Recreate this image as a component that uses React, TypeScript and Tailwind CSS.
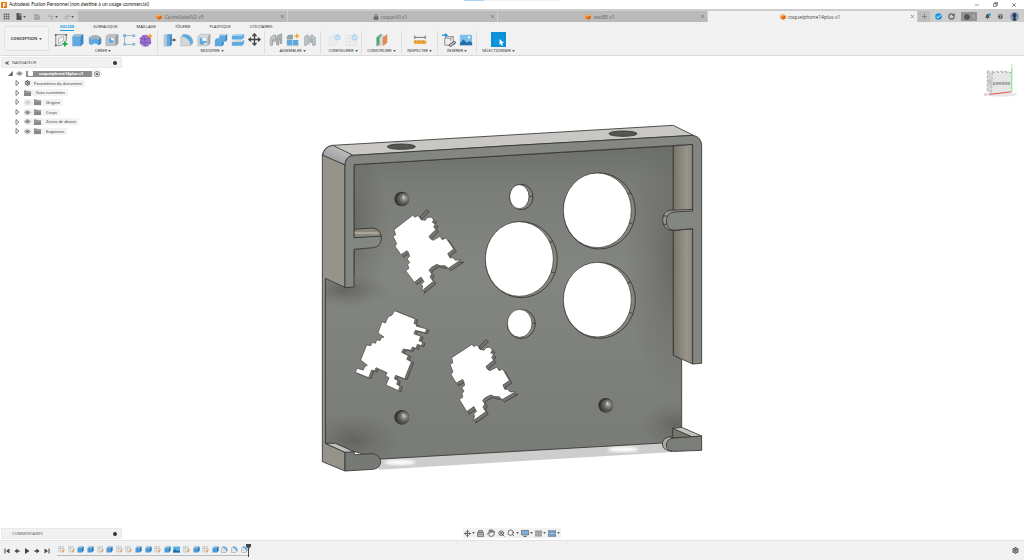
import React from "react";
import {
  ChevronsLeft,
  CircleHelp,
  Clock,
  Copy,
  Grip,
  Hand,
  Minus,
  Move,
  Plus,
  Redo2,
  RotateCw,
  Save,
  Search,
  Settings,
  Undo2,
  X,
  ZoomIn,
} from "lucide-react";

const Caret = () => (
  <svg viewBox="0 0 4 3" className="h-[2px] w-[3px] shrink-0" fill="#555">
    <path d="M0 0h4L2 3z" />
  </svg>
);

const Cube = () => (
  <svg viewBox="0 0 12 12" className="h-[6px] w-[6px] shrink-0">
    <path d="M1 3 6 .5 11 3v6L6 11.7 1 9z" fill="#f47a1c" />
    <path d="M1 3 6 .5 11 3 6 5.5z" fill="#ffb066" />
    <path d="M6 5.5 11 3v6l-5 2.7z" fill="#e4600a" />
  </svg>
);

const Lock = () => (
  <svg viewBox="0 0 12 12" className="h-[6px] w-[6px] shrink-0">
    <path d="M3.5 6V3.5a2.5 2.5 0 0 1 5 0V6" fill="none" stroke="#666" strokeWidth="1.5" />
    <rect x="1.5" y="5" width="9" height="6.5" fill="#666" />
  </svg>
);

/* ---------- Toolbar icons ---------- */

const BLUE = "#5fa8e0";
const DARK = "#3c86c4";
const LIGHT = "#9fd0f2";

const art: Record<string, React.ReactNode> = {
  sketch: (
    <>
      <path d="M2 2h12M2 2v12M14 2v7M2 14h7" stroke="#777" fill="none" />
      <path d="M5 12V6l6-2v5L5 12" stroke="#999" fill="none" strokeWidth=".8" />
      <path d="M1 1h2v2H1zM13 1h2v2h-2zM1 13h2v2H1z" fill="#666" />
      <path d="M12.500 9.500v6M9.500 12.500h6" stroke="#20a848" strokeWidth="2" />
    </>
  ),
  extrude: (
    <>
      <path d="M1.500 4 4 1.500h10V12l-3 3H1.500z" fill={BLUE} />
      <path d="M1.500 4 4 1.500h10L11 4z" fill="#a9bccb" />
      <path d="M11 4l3-2.500V12l-3 3z" fill={DARK} />
    </>
  ),
  revolve: (
    <>
      <path d="M1 5q7-5 14 0v7l-3 2q-4-4-8 0l-3-2z" fill={BLUE} />
      <path d="M1 5q7-5 14 0l-3 3q-4-3-8 0z" fill="#a9b3ba" />
      <path d="M12 8 15 5v7l-3 2z" fill={DARK} />
    </>
  ),
  hole: (
    <>
      <path d="M1 4 4 1.500h11V12l-3 2.500H1z" fill="#bfc2c4" stroke="#999" strokeWidth=".4" />
      <path d="M12 4 15 1.500V12l-3 2.500z" fill="#999" />
      <circle cx="7" cy="8.500" r="4" fill="#f4f4f4" stroke="#999" strokeWidth=".6" />
      <path d="M7 5.500a3 3 0 1 0 3 3L7 8z" fill={BLUE} />
    </>
  ),
  pattern: (
    <>
      <path d="M3 3h10M3 3v10M3 13h10" stroke="#9ab" strokeWidth="1" fill="none" />
      <path d="M1.500 1.500h3v3h-3z" fill={BLUE} />
      <path d="M12 1.500h3v3h-3zM12 11.500h3v3h-3zM1.500 11.500h3v3h-3z" fill="#8db9d8" />
    </>
  ),
  form: (
    <>
      <path d="M1 6 4 2.500 9 2l4.500 3.500.5 6-4 4H5l-4-3.500z" fill="#9a73cf" />
      <path d="M1 6l6 1.500 6.500-2M7 7.500v8M1 11l6-.5 7 1M5 2.500l2 5" stroke="#7650b0" fill="none" strokeWidth=".9" />
      <path d="m12.500 0 1 2.500L16 3.500l-2.500 1-1 2.500-1-2.500L9 3.500l2.500-1z" fill="#f5a11b" />
    </>
  ),
  press: (
    <>
      <path d="M1 3 3 1h7v12l-2 2H1z" fill={BLUE} />
      <path d="M8 3l2-2v12l-2 2z" fill={DARK} />
      <path d="M1 3 3 1h3L4.500 3v12H1z" fill="#b9c4cc" />
      <path d="M10 8h2.500" stroke="#444" strokeWidth="1.200" />
      <path d="m12 6 3 2-3 2z" fill="#444" />
    </>
  ),
  fillet: (
    <>
      <path d="M1 4 4 1.500q9 0 11 9L12 14.500H1z" fill="#d5d8da" stroke="#999" strokeWidth=".5" />
      <path d="M4 1.500q10 0 11 9.500l-3 3q-1-9-10-10z" fill={BLUE} />
    </>
  ),
  shell: (
    <>
      <path d="M1 4 4 1.500h11V12l-3 2.500H1z" fill="#d8dadb" stroke="#999" strokeWidth=".5" />
      <path d="M3 5.500h8V11H8v2H3z" fill={BLUE} />
      <path d="M6 5.500h5V9H6z" fill="#f2f6f9" />
      <path d="M12 4 15 1.500V12l-3 2.500z" fill="#aaa" />
    </>
  ),
  combine: (
    <>
      <path d="M1 8 3 6h3V3l2-2h7v7l-2 2h-2v3l-2 2H1z" fill={BLUE} />
      <path d="m13 3 2-2v7l-2 2zM9 10h2v3l-2 2z" fill={DARK} />
      <path d="m6 3 2-2h7l-2 2z" fill={LIGHT} />
    </>
  ),
  split: (
    <>
      <path d="M1 3.500 3.500 1H15v4l-2.500 2.500H1z" fill={BLUE} />
      <path d="M1 3.500 3.500 1H15l-2.500 2.500z" fill={LIGHT} />
      <path d="M1 10h11.500L15 7.500V12l-2.500 2.500H1z" fill={BLUE} />
      <path d="M1 10 3.500 8H15l-2.500 2z" fill="#d8dadb" />
    </>
  ),
  joint: (
    <>
      <path d="M1.500 14V8q0-4 3-5l3-1v7L5 10v-3q-1 0-1 2v5z" fill="#c4c7c9" stroke="#888" strokeWidth=".7" />
      <path d="M8.500 13V6q0-3 3-4l3-1v11h-2V7q-1.500 0-1.500 2v5z" fill="#aeb2b5" stroke="#888" strokeWidth=".7" />
    </>
  ),
  component: (
    <>
      <path d="M1 4h6v4h7v7H1z" fill="#c9ccce" />
      <path d="M1 8h6v6H1z" fill={BLUE} />
      <path d="M8 8h6v6H8z" fill={BLUE} />
      <path d="M1 4 3 2h5v5H1z" fill="#8fa3b0" />
      <path d="m12.500 0 1 2.500L16 3.500l-2.500 1-1 2.500-1-2.500L9 3.500l2.500-1z" fill="#f5a11b" />
    </>
  ),
  asbuilt: (
    <>
      <path d="M2 14V4l3-2 1 1v9l-2 2z" fill="#c4c7c9" stroke="#888" strokeWidth=".7" />
      <path d="M14 14V5l-4-3-2 3v5l2 1V6l1 1v7z" fill="#c4c7c9" stroke="#888" strokeWidth=".7" />
      <path d="M7 3v10" stroke="#6ab0e0" strokeWidth=".8" />
    </>
  ),
  config: (
    <>
      <path d="M1 5 4 3h6v9l-2 2H1z" fill="#e9ebec" stroke="#ddd" strokeWidth=".5" />
      <circle cx="11" cy="5" r="3.500" fill="#b4d8ef" />
      <path d="m9.500 5 1.200 1.200L12.800 4" stroke="#fff" fill="none" />
    </>
  ),
  table: (
    <>
      <path d="M1 3h12v11H1zM1 6.500h12M1 10h12M5 3v11" fill="none" stroke="#dcdfe0" />
      <circle cx="11" cy="5" r="3.500" fill="#b4d8ef" />
      <path d="m9.500 5 1.200 1.200L12.800 4" stroke="#fff" fill="none" />
    </>
  ),
  plane: (
    <>
      <path d="m2 5 5-4v10l-5 4z" fill="#43b06f" stroke="#7a8a80" strokeWidth=".6" />
      <path d="m5 5 4-3v10l-4 3z" fill="#d6dbd8" stroke="#999" strokeWidth=".4" />
      <path d="m9 5 5-4v10l-5 4z" fill="#e58a56" />
    </>
  ),
  measure: (
    <>
      <path d="M2 3v4M14 3v4M2 5h12" stroke="#555" strokeWidth=".9" />
      <path d="M1 8.500h14v4H1z" fill="#eda63c" />
      <path d="M3 8.500v2M6 8.500v2M9 8.500v2M12 8.500v2" stroke="#a86f1d" strokeWidth=".7" />
    </>
  ),
  insert: (
    <>
      <path d="M3 6l3-2h7v6M3 6v8h5M3 6h7l3-2M10 6v3" fill="#e3e5e6" stroke="#888" strokeWidth=".9" />
      <path d="M0 2.500h4" stroke="#1e8fd6" strokeWidth="1.500" />
      <path d="m3.500 0 3.500 2.500L3.500 5z" fill="#1e8fd6" />
      <path d="M9.500 14l4.500-3" stroke="#555" strokeWidth="3.500" strokeLinecap="round" />
      <path d="M9.500 14l4.500-3" stroke="#eee" strokeWidth="1.200" strokeLinecap="round" />
    </>
  ),
  image: (
    <>
      <path d="M1 2h14v12H1z" fill="#7cc0ec" />
      <path d="m1 12 4-5 4 4 3-2 3 2v3H1z" fill="#256fa8" />
      <circle cx="11.500" cy="5" r="1.300" fill="#fff" />
    </>
  ),
};

const ToolIcon = ({ name, label }: { name: string; label: string }) => (
  <button aria-label={label} className="flex h-[17px] w-[17px] items-center justify-center">
    {name === "move" ? (
      <Move className="h-[13px] w-[13px] text-[#444]" strokeWidth={2.500} />
    ) : (
      <svg viewBox="0 0 16 16" className="h-[14px] w-[14px]">
        {art[name]}
      </svg>
    )}
  </button>
);

const groups: { label: string; pad: string; icons: [string, string][] }[] = [
  {
    label: "CRÉER",
    pad: "pr-[3px]",
    icons: [
      ["sketch", "Esquisse"],
      ["extrude", "Extrusion"],
      ["revolve", "Révolution"],
      ["hole", "Perçage"],
      ["pattern", "Réseau"],
      ["form", "Forme"],
    ],
  },
  {
    label: "MODIFIER",
    pad: "pl-[3px] pr-[1px]",
    icons: [
      ["press", "Appuyer/Tirer"],
      ["fillet", "Congé"],
      ["shell", "Coque"],
      ["combine", "Combiner"],
      ["split", "Scinder"],
      ["move", "Déplacer"],
    ],
  },
  {
    label: "ASSEMBLER",
    pad: "px-[2px]",
    icons: [
      ["joint", "Liaison"],
      ["component", "Nouveau composant"],
      ["asbuilt", "Liaison existante"],
    ],
  },
  {
    label: "CONFIGURER",
    pad: "pl-[5px] pr-[1px]",
    icons: [
      ["config", "Configurer"],
      ["table", "Table"],
    ],
  },
  { label: "CONSTRUIRE", pad: "px-[11px]", icons: [["plane", "Plan"]] },
  { label: "INSPECTER", pad: "px-[9px]", icons: [["measure", "Mesurer"]] },
  {
    label: "INSÉRER",
    pad: "px-[2px]",
    icons: [
      ["insert", "Insérer"],
      ["image", "Image"],
    ],
  },
];

const MenuLabel = ({ children }: { children: string }) => (
  <button className="flex h-[6px] items-center justify-center gap-[1px] whitespace-nowrap text-[4px] leading-[6px] text-[#333]">
    {children}
    <Caret />
  </button>
);

const Toolbar = () => (
  <div className="flex h-[34px] shrink-0 border-b border-[#dcdcdc] bg-[#f1f1f1] font-['Noto_Sans','Open_Sans',sans-serif]">
    <button className="mt-[4px] ml-[4px] flex h-[25px] w-[45px] shrink-0 items-center justify-center gap-[2px] rounded-[2px] border border-[#e2e2e2] bg-[#f3f3f3] text-[4px] font-bold text-[#444]">
      CONCEPTION
      <Caret />
    </button>
    <div className="flex flex-col pt-[1px] pl-[3px]">
      <nav className="flex h-[8px] gap-[19px] pl-[8px] text-[4px] leading-[7px] text-[#333]">
        <a href="#solide" className="border-b border-[#1a9ae0] font-bold text-[#1a9ae0]">SOLIDE</a>
        <a href="#surfacique">SURFACIQUE</a>
        <a href="#maillage">MAILLAGE</a>
        <a href="#tolerie">TÔLERIE</a>
        <a href="#plastique">PLASTIQUE</a>
        <a href="#utilitaires">UTILITAIRES</a>
      </nav>
      <div className="flex h-[23px] divide-x divide-[#dedede]">
        {groups.map((g) => (
          <div key={g.label} className={`flex flex-col items-center ${g.pad}`}>
            <div className="flex">
              {g.icons.map(([n, l]) => (
                <ToolIcon key={n} name={n} label={l} />
              ))}
            </div>
            <div className="flex w-0 justify-center">
              <MenuLabel>{g.label}</MenuLabel>
            </div>
          </div>
        ))}
        <div className="flex flex-col items-center px-[5px]">
          <button aria-label="Sélection" className="mt-[1px] mb-[1px] h-[15px] w-[15px] bg-[#0c95dd]">
            <svg viewBox="0 0 15 15" className="h-[15px] w-[15px]">
              <path d="M1.500 1.500h12v12h-12z" fill="none" stroke="#0670ab" strokeDasharray="1 1" strokeWidth=".6" />
              <path d="m8.500 7 4.500 4-2 .3 1 2.200-1.200.5-1-2.200-1.300 1.300z" fill="#fff" />
            </svg>
          </button>
          <MenuLabel>SÉLECTIONNER</MenuLabel>
        </div>
      </div>
    </div>
  </div>
);

/* ---------- Document tabs ---------- */

const tabs = [
  { name: "CacheSoleilV2 v5", icon: <Cube />, active: false },
  { name: "coqueV0 v1", icon: <Lock />, active: false },
  { name: "test88 v1", icon: <Cube />, active: false },
  { name: "coqueiphone14plus v1", icon: <Cube />, active: true },
];

const QuickButton = ({ label, children }: { label: string; children: React.ReactNode }) => (
  <button aria-label={label} className="flex items-center gap-[1px]">
    {children}
  </button>
);

const TabBar = () => (
  <div className="flex h-[13px] shrink-0 bg-[#cdcdcd] pt-[2px]">
    <div className="flex w-[78px] shrink-0 items-center pl-[3px] text-[#555]">
      <QuickButton label="Données"><Grip className="h-[7px] w-[7px]" strokeWidth={4} /></QuickButton>
      <div className="ml-[6px] flex">
        <QuickButton label="Fichier">
          <svg viewBox="0 0 12 14" className="h-[7px] w-[6px]"><path d="M1 0h6v5h4v9H1z" fill="#555" /><path d="m8 0 3.500 4H8z" fill="#555" /></svg>
          <Caret />
        </QuickButton>
      </div>
      <div className="ml-[8px] flex"><QuickButton label="Enregistrer"><Save className="h-[6px] w-[6px] text-[#888]" strokeWidth={3} /></QuickButton></div>
      <div className="ml-[8px] flex text-[#999]"><QuickButton label="Annuler"><Undo2 className="h-[6px] w-[6px]" strokeWidth={3} /><Caret /></QuickButton></div>
      <div className="ml-[6px] flex text-[#999]"><QuickButton label="Rétablir"><Redo2 className="h-[6px] w-[6px]" strokeWidth={3} /><Caret /></QuickButton></div>
    </div>
    <div className="flex flex-1 gap-[1px]">
      {tabs.map((t) => (
        <div
          key={t.name}
          className={`flex flex-1 items-center text-[5px] leading-[10px] ${t.active ? "bg-[#f1f1f1] text-[#444]" : "bg-[#bababa] text-[#666]"}`}
        >
          <button className="flex flex-1 items-center justify-center gap-[2px] pl-[2px] whitespace-nowrap">
            {t.icon}
            {t.name}
          </button>
          <button aria-label={`Fermer ${t.name}`} className="pr-[2px]">
            <X className="h-[5px] w-[5px] text-[#666]" strokeWidth={3} />
          </button>
        </div>
      ))}
    </div>
    <button aria-label="Nouvel onglet" className="ml-[1px] flex w-[12px] items-center justify-center bg-[#bdbdbd]">
      <Plus className="h-[7px] w-[7px] text-[#777]" strokeWidth={3} />
    </button>
    <div className="flex w-[94px] shrink-0 items-center justify-between pr-[5px] pl-[5px]">
      <QuickButton label="Extensions">
        <svg viewBox="0 0 14 14" className="h-[7px] w-[7px]"><circle cx="7" cy="7" r="6.500" fill="#1b93de" /><path d="m3.500 7.500 2.500 2 5-5" fill="none" stroke="#fff" strokeWidth="2" /></svg>
      </QuickButton>
      <QuickButton label="Synchroniser"><RotateCw className="h-[7px] w-[7px] text-[#666]" strokeWidth={4} /></QuickButton>
      <button aria-label="Tâches" className="flex h-[9px] w-[16px] items-center justify-center gap-[2px] rounded-[1px] bg-[#929292] text-[4px] leading-[9px] text-white">
        <Clock className="h-[6px] w-[6px] fill-[#555] text-[#555]" strokeWidth={3.500} />1
      </button>
      <QuickButton label="Notifications">
        <svg viewBox="0 0 14 14" className="h-[7px] w-[7px]"><path d="M2 10q2-2 2-5 0-3 3-3t3 3q0 3 2 5zM5.500 11h3l-1.500 2z" fill="#555" /><circle cx="11" cy="3" r="2.500" fill="#1b93de" /></svg>
      </QuickButton>
      <QuickButton label="Aide">
        <CircleHelp className="h-[7px] w-[7px] fill-[#555] text-[#e6e6e6]" strokeWidth={2.500} />
      </QuickButton>
      <QuickButton label="Profil">
        <svg viewBox="0 0 18 18" className="h-[9px] w-[9px]"><circle cx="9" cy="9" r="9" fill="#8aa0b8" /><path d="M5 6q0-4 4-4t4 4q0 4-2 5v2l3 3q-5 3-10 0l3-3v-2Q5 10 5 6z" fill="#2d3a50" /></svg>
      </QuickButton>
    </div>
  </div>
);

/* ---------- Browser tree ---------- */

const Eye = ({ off }: { off?: boolean }) => (
  <svg viewBox="0 0 14 10" className="h-[5px] w-[7px] shrink-0" opacity={off ? 0.35 : 1}>
    <path d="M1 5q6-7 12 0-6 7-12 0z" fill="#ccc" stroke="#777" strokeWidth="1.200" />
    <circle cx="7" cy="5" r="2.200" fill="#666" />
  </svg>
);

const Folder = () => (
  <svg viewBox="0 0 14 12" className="h-[6px] w-[7px] shrink-0">
    <path d="M0 1h5l1 1.500h8V12H0z" fill="#888" />
    <path d="M0 4.500h14" stroke="#bbb" />
  </svg>
);

const Expand = () => (
  <button aria-label="Développer" className="flex h-[6px] w-[6px] items-center">
    <svg viewBox="0 0 10 12" className="h-[6px] w-[5px]"><path d="m2 1 6 5-6 5z" fill="#fff" stroke="#555" strokeWidth="1.500" /></svg>
  </button>
);

const nodes: { name: string; eye?: "on" | "off"; gear?: boolean }[] = [
  { name: "Paramètres du document", gear: true },
  { name: "Vues nommées" },
  { name: "Origine", eye: "off" },
  { name: "Corps", eye: "on" },
  { name: "Zones de dessin", eye: "on" },
  { name: "Esquisses", eye: "on" },
];

const PanelHeader = ({ title, collapse }: { title: string; collapse?: boolean }) => (
  <div className="flex h-[11px] w-[121px] items-center border border-[#e9e9e9] bg-[#f1f1f1] pr-[4px] pl-[2px] text-[4px] leading-[10px] text-[#555]">
    <span className="flex w-[8px]">
      {collapse && <ChevronsLeft className="h-[6px] w-[6px] text-[#333]" strokeWidth={4} />}
    </span>
    <span className="flex-1">{title}</span>
    <button aria-label={`Options ${title}`} className="h-[4px] w-[4px] rounded-full bg-[#333]" />
  </div>
);

const Browser = () => (
  <aside className="absolute top-[1px] left-[1px] font-['Noto_Sans','Open_Sans',sans-serif]">
    <PanelHeader title="NAVIGATEUR" collapse />
    <ul className="mt-[1px] grid h-[67px] grid-rows-7 items-center text-[4px] leading-[7px] text-[#333]">
      <li className="flex items-center gap-[3px] pl-[7px]">
        <svg viewBox="0 0 10 10" className="h-[5px] w-[5px]"><path d="M9.500 0v10H0z" fill="#666" /></svg>
        <Eye />
        <span className="flex items-center">
          <span className="flex h-[6px] w-[66px] items-center gap-[6px] bg-[#8e8e8e] pl-[2px] font-bold text-white">
            <span className="h-[5px] w-[5px] rounded-[1px] bg-white" />
            coqueiphone14plus v1
          </span>
          <label className="flex h-[7px] w-[10px] items-center justify-center bg-[#f1f1f1]">
            <input type="radio" defaultChecked aria-label="Activer le composant" className="h-[6px] w-[6px] appearance-none rounded-full border border-[#888] bg-[#444] bg-clip-content p-[1px]" />
          </label>
        </span>
      </li>
      {nodes.map((n) => (
        <li key={n.name} className="flex items-center gap-[3px] pl-[14px]">
          <Expand />
          <span className="flex h-[7px] items-center gap-[3px] bg-[#f3f3f3] pr-[3px] whitespace-nowrap">
            {n.eye && <Eye off={n.eye === "off"} />}
            {n.gear ? <Settings className="h-[6px] w-[7px] text-[#555]" strokeWidth={4} /> : <Folder />}
            <span className={n.gear ? "" : "pl-[2px]"}>{n.name}</span>
          </span>
        </li>
      ))}
    </ul>
  </aside>
);

/* ---------- View cube ---------- */

const ViewCube = () => (
  <svg viewBox="280 185 105 110" className="absolute top-[6px] right-[6px] h-[36px] w-[35px]">
    <ellipse cx="335" cy="284" rx="48" ry="7" fill="#e6e6e6" />
    <path d="m292 213 16 4-3 66-13-6z" fill="#d6d6d6" />
    <path d="m308 217 57 1v58l-60 7z" fill="#e6e6e6" />
    <path d="m292 213 60-1 13 6-57-1z" fill="#f4f4f4" />
    <path d="m292 213 60 1 13 4M292 213v64M308 217l-3 66M308 217h57" fill="none" stroke="#999" strokeWidth="2" strokeDasharray="8 5" />
    <path d="m298 284 68-8" stroke="#e05252" strokeWidth="3" />
    <path d="M367 276v-74" stroke="#6be36b" strokeWidth="3" />
    <text x="309" y="254" fontSize="12" fontWeight="700" fill="#888" fontFamily="Liberation Sans, sans-serif">ARRIÈRE</text>
    <path d="m295 238 8 18M303 240l-8 14" stroke="#aaa" strokeWidth="2" />
    <text x="282" y="290" fontSize="13" fill="#e07070" fontFamily="Liberation Sans, sans-serif">X</text>
    <text x="362" y="200" fontSize="13" fill="#6be36b" fontFamily="Liberation Sans, sans-serif">Y</text>
  </svg>
);

/* ---------- 3D model ---------- */

const RUNNER_A =
  "M0 0 56-43 63-37 71-42 77-37 81-30 94-28 99-36 111-38 119-30 115-22 124-17 119-8 126 0 121 4 105 20 109 27 118 32 138 20 145 30 156 25 179 58 161 72 168 85 176 84 185 92 201 90 163 116 153 108 138 108 128 104 111 114 105 122 113 132 108 142 118 155 83 184 86 168 81 165 90 156 81 142 61 158 35 123 45 116 41 105 47 98 39 88 47 80 43 68 39 63 21 75 3 50 8 42-3 20 5 15z";
const RUNNER_A_SLOT = "M78-38 98-60 105-53 85-33z";
const RUNNER_B =
  "M136 17 198 42 194 55 203 60 200 63 232 72 227 83 198 76 194 86 214 94 209 107 220 112 216 122 204 118 200 130 189 126 185 136 162 132 157 142 177 152 172 163 186 170 166 221 139 211 135 221 146 227 142 238 152 244 147 257 110 240 119 218 109 213 113 203 80 188 76 198 67 195 58 218 18 202 23 190 42 195 46 185 54 181 34 165 52 120 64 122 69 112 78 115 83 104 92 107 96 98 104 96 86 84 98 50 108 54 116 36 128 30z";

const Cutout = ({ d, dx, dy, slot }: { d: string; dx: number; dy: number; slot?: string }) => (
  <>
    <path d={d} transform={`translate(${dx} ${dy})`} fill="#73746f" stroke="#333" strokeWidth="2" />
    <path d={d} transform={`translate(${dx / 2} ${dy / 2})`} fill="#73746f" />
    {slot && <path d={slot} fill="#73746f" stroke="#333" strokeWidth="2" />}
    <path d={d} fill="#fff" stroke="#444" strokeWidth="2" />
  </>
);

const bores = [
  { cx: 868, cy: 288, rx: 108, ry: 114, ix: 862, iy: 286, irx: 102, iry: 112 },
  { cx: 868, cy: 556, rx: 108, ry: 114, ix: 862, iy: 554, irx: 102, iry: 112 },
  { cx: 634, cy: 434, rx: 108, ry: 114, ix: 628, iy: 432, irx: 102, iry: 112 },
  { cx: 634, cy: 246, rx: 35, ry: 38, ix: 628, iy: 245, irx: 29, iry: 36 },
  { cx: 634, cy: 627, rx: 42, ry: 44, ix: 629, iy: 625, irx: 37, iry: 42 },
];

const studs = [
  [276, 252],
  [276, 907],
  [888, 871],
];

const Model = () => (
  <svg viewBox="30 24 1152 1056" className="h-[352px] w-[384px]" role="img" aria-label="Coque">
    <defs>
      <linearGradient id="plate" x1="0" y1="0" x2="0" y2="1">
        <stop offset="0" stopColor="#6d6f6a" />
        <stop offset=".12" stopColor="#7a7c77" />
        <stop offset=".4" stopColor="#838580" />
        <stop offset="1" stopColor="#797b76" />
      </linearGradient>
      <radialGradient id="dark">
        <stop offset="0" stopColor="#4c4d4a" stopOpacity=".5" />
        <stop offset=".5" stopColor="#4c4d4a" stopOpacity=".2" />
        <stop offset="1" stopColor="#4c4d4a" stopOpacity="0" />
      </radialGradient>
      <linearGradient id="wall" x1="0" x2="1">
        <stop offset="0" stopColor="#777369" />
        <stop offset=".7" stopColor="#9a958a" />
        <stop offset="1" stopColor="#8a867b" />
      </linearGradient>
      <linearGradient id="corner" x1="0" y1="1" x2=".7" y2="0">
        <stop offset="0" stopColor="#8e8c83" />
        <stop offset=".5" stopColor="#a9a9ab" />
        <stop offset="1" stopColor="#c9c7c4" />
      </linearGradient>
      <radialGradient id="ball" cx=".6" cy=".4">
        <stop offset="0" stopColor="#c2bfb9" />
        <stop offset=".4" stopColor="#84827d" />
        <stop offset="1" stopColor="#4e4e4b" />
      </radialGradient>
      <clipPath id="plateClip">
        <path d="M46 480H132V149L600 121 1090 93V717L1115 735V981L1057 984 600 1010 212 1032 46 985z" />
      </clipPath>
      <filter id="soft"><feGaussianBlur stdDeviation="4" /></filter>
    </defs>

    <path d="M205 1030 600 1008 1115 978 1130 1009 600 1040 205 1064z" fill="#cdcdcd" />
    <ellipse cx="270" cy="1042" rx="46" ry="8" fill="#fff" filter="url(#soft)" />
    <ellipse cx="940" cy="1003" rx="46" ry="8" fill="#fff" filter="url(#soft)" />

    <g stroke="#333" strokeWidth="2.500" strokeLinejoin="round">
      <path d="M46 480H132V149L600 121 1090 93V717L1115 735V981L1057 984 600 1010 212 1032 46 985z" fill="url(#plate)" />
      <g clipPath="url(#plateClip)" stroke="none">
        <ellipse cx="125" cy="330" rx="110" ry="260" fill="url(#dark)" />
        <ellipse cx="1095" cy="440" rx="150" ry="420" fill="url(#dark)" />
        <ellipse cx="100" cy="525" rx="140" ry="50" fill="url(#dark)" />
        <ellipse cx="130" cy="975" rx="140" ry="80" fill="url(#dark)" />
        <ellipse cx="1100" cy="930" rx="110" ry="70" fill="url(#dark)" />
      </g>

      {bores.map((b) => (
        <g key={`${b.cx}-${b.cy}`}>
          <ellipse cx={b.cx} cy={b.cy} rx={b.rx} ry={b.ry} fill="#85847d" />
          <ellipse cx={b.ix} cy={b.iy} rx={b.irx} ry={b.iry} fill="#fff" strokeWidth="2" />
        </g>
      ))}
      <path d="m952 236 11-3M957 323l11 4M952 504l11-3M957 592l11 4M718 382l11-3M723 470l11 4M657 244h11M666 625h10" fill="none" />

      <path d="M37 120Q42 95 68 91L600 60 1090 31 1150 61 600 92 130 121 105 150z" fill="#c9c7c3" />
      <path d="M37 123Q42 95 68 91L130 121Q107 124 105 150z" fill="url(#corner)" />
      <path d="M37 120 105 150V517L46 490V985L105 1012V1068L37 1040z" fill="#96938a" />
      <ellipse cx="274" cy="95" rx="42" ry="8" fill="#555652" />
      <ellipse cx="939" cy="56" rx="42" ry="8" fill="#555652" />

      <path d="M1090 93 1148 88V288L1090 290z" fill="url(#wall)" />
      <path d="M1090 346 1148 341V747L1090 721z" fill="url(#wall)" />

      <path d="M132 343 187 339Q212 342 214 366L132 368z" fill="#8b877b" />
      <path d="M133 354H205" stroke="#b0aca0" strokeWidth="5" />
      <path d="M1148 283 1080 286Q1058 290 1058 316 1060 344 1084 346L1148 341z" fill="#99968d" />
      <path d="M1059 303h12M1060 328h12" />

      <path
        d="M105 150Q107 123 130 121L600 92 1150 61Q1174 66 1175 92V745L1148 747V341L1092 346Q1070 344 1069 319 1070 293 1092 291L1148 288V88L600 121 132 149V368L205 364H214Q216 394 190 398L132 403V516L105 518z"
        fill="#838681"
      />

      <path d="M46 985 76 985 132 1010V1014L105 1012z" fill="#c2c1be" />
      <path d="M105 1012 132 1010 134 1019 190 1016Q212 1022 212 1040 210 1060 190 1063L105 1068z" fill="#777975" />

      <path d="M1088 940 1103 941 1150 966 1088 970z" fill="#77746b" />
      <path d="M1088 940 1115 937 1175 963 1148 966z" fill="#c2c1be" />
      <path d="M1085 965Q1057 966 1057 987 1058 1006 1085 1009z" fill="#aaa79c" />
      <path d="M1092 969 1175 963V1006L1092 1009Q1069 1008 1069 990 1070 971 1092 969z" fill="#7c7e7a" />
    </g>

    {studs.map(([x, y]) => (
      <g key={`${x}-${y}`}>
        <circle cx={x - 1} cy={y} r="22" fill="#343432" />
        <circle cx={x + 3} cy={y + 1} r="19" fill="url(#ball)" />
        <path d={`M${x + 4} ${y - 9}v6`} stroke="#cfccc5" strokeWidth="4" strokeLinecap="round" />
      </g>
    ))}

    <g transform="translate(252 344)">
      <Cutout d={RUNNER_A} dx={8} dy={7} slot={RUNNER_A_SLOT} />
    </g>
    <g transform="matrix(1 .06 -.1 1 425 728)">
      <Cutout d={RUNNER_A} dx={8} dy={7} slot={RUNNER_A_SLOT} />
    </g>
    <g transform="translate(118 570)">
      <Cutout d={RUNNER_B} dx={7} dy={3} />
    </g>
  </svg>
);

/* ---------- View controls ---------- */

const Monitor = () => (
  <svg viewBox="0 0 16 14" className="h-[7px] w-[8px]"><path d="M1 1h14v9H1z" fill="#7db0dc" stroke="#666" strokeWidth="1.500" /><path d="M5 13h6" stroke="#666" strokeWidth="2" /></svg>
);

const ViewControls = () => (
  <div className="absolute inset-x-0 bottom-[2px] flex justify-center">
    <div className="flex h-[10px] items-center gap-[2px] bg-[#f1f1f1] px-[1px] text-[#555]">
      <QuickButton label="Orbite"><Move className="h-[7px] w-[7px]" strokeWidth={3} /><Caret /></QuickButton>
      <QuickButton label="Regarder">
        <svg viewBox="0 0 14 14" className="h-[7px] w-[7px]"><path d="M1 5h12v8H1zM3 1h8v4H3z" fill="#bbb" stroke="#666" strokeWidth="1.500" /><path d="M1 9h12" stroke="#666" /></svg>
      </QuickButton>
      <span className="flex px-[1px]"><QuickButton label="Panoramique"><Hand className="h-[8px] w-[8px]" strokeWidth={2.500} /></QuickButton></span>
      <QuickButton label="Zoom"><ZoomIn className="h-[7px] w-[7px]" strokeWidth={3} /></QuickButton>
      <QuickButton label="Ajuster"><Search className="h-[8px] w-[8px]" strokeWidth={2.500} /><Caret /></QuickButton>
      <QuickButton label="Affichage"><Monitor /><Caret /></QuickButton>
      <QuickButton label="Grille">
        <svg viewBox="0 0 14 14" className="h-[7px] w-[7px]"><path d="M0 1h14v12H0z" fill="#999" /><path d="M0 5h14M0 9h14M5 5v8M10 5v8" stroke="#bbb" /></svg>
        <Caret />
      </QuickButton>
      <QuickButton label="Fenêtres">
        <svg viewBox="0 0 16 14" className="h-[7px] w-[8px]"><path d="M0 1h7v5H0zM9 1h7v5H9zM0 8h7v5H0zM9 8h7v5H9z" fill="#6ea3d4" stroke="#56718a" strokeWidth="1" /></svg>
        <Caret />
      </QuickButton>
    </div>
  </div>
);

/* ---------- Timeline ---------- */

const steps = "s s e e s e s s e e s e i s e s e f f f".split(" ");

const StepIcon = ({ kind }: { kind: string }) => (
  <svg viewBox="0 0 14 14" className="h-[7px] w-[7px]">
    {kind === "s" && (
      <>
        <path d="M1 1h10v11H1zM1 5h10M5 1v11" fill="#e6eaec" stroke="#b4babd" strokeWidth="1" />
        <path d="m8 12 5-5" stroke="#eb9a55" strokeWidth="2.500" />
      </>
    )}
    {kind === "e" && (
      <>
        <path d="M1 4 4 1h9v8l-3 4H1z" fill="#4a9bdc" />
        <path d="M1 4 4 1h9l-3 3z" fill="#9fc0d8" />
        <path d="m10 4 3-3v8l-3 4z" fill="#2f78b4" />
      </>
    )}
    {kind === "i" && (
      <>
        <path d="M0 1h14v12H0z" fill="#5db1ea" />
        <path d="m0 11 4-5 4 4 3-2 3 3v2H0z" fill="#1d66a4" />
      </>
    )}
    {kind === "f" && (
      <>
        <path d="M1 4 4 1q8 0 9 8l-3 4H1z" fill="#e2e4e5" stroke="#999" />
        <path d="M5 1q7 0 8 8l-2 2Q9 4 3 3z" fill="#5fa8e0" />
      </>
    )}
  </svg>
);

const playback: [string, string][] = [
  ["Début", "M1 1h2v10H1zM11 1v10L4 6z"],
  ["Précédent", "M7 1v10L1 6zM7 4.500h4v3H7z"],
  ["Lecture", "M2 0v12l9-6z"],
  ["Suivant", "M5 1v10l6-5zM1 4.500h4v3H1z"],
  ["Fin", "M1 1v10l7-5zM9 1h2v10H9z"],
];

const Timeline = () => (
  <footer className="flex h-[20px] shrink-0 items-center border-t border-[#e2e2e2] bg-[#f1f1f1]">
    <div className="flex w-[57px] items-center gap-[4px] pl-[4px]">
      {playback.map(([label, d]) => (
        <button key={label} aria-label={label} className="h-[6px] w-[6px]">
          <svg viewBox="0 0 12 12" className="h-[6px] w-[6px]" fill="#444"><path d={d} /></svg>
        </button>
      ))}
    </div>
    <div className="grid h-[13px] w-[192px] grid-cols-20 pt-[2px]">
      {steps.map((k, i) => (
        <button key={i} aria-label={`Étape ${i + 1}`} className="flex h-[10px] flex-col items-center border-b border-[#bbb]">
          <StepIcon kind={k} />
        </button>
      ))}
    </div>
    <svg viewBox="0 0 10 26" className="-ml-[3px] h-[13px] w-[5px]"><path d="M0 0h10v5l-4 4v17H4V9L0 5z" fill="#444" /></svg>
    <button aria-label="Préférences" className="mr-[5px] ml-auto">
      <Settings className="h-[7px] w-[7px] text-[#555]" strokeWidth={3.500} />
    </button>
  </footer>
);

export default function App() {
  return (
    <div className="flex h-screen flex-col overflow-hidden bg-white font-['Open_Sans','Noto_Sans',sans-serif]">
      <header className="relative flex h-[9px] shrink-0 items-center gap-[2px] pr-[7px] pl-[1px] text-[5px] leading-[9px] text-[#222]">
        <svg viewBox="0 0 12 12" className="h-[6px] w-[6px]"><rect width="12" height="12" rx="1" fill="#ef7a1a" /><path d="M4 2.500h5v2H6v1h2.500v2H6v3H4z" fill="#fff" /></svg>
        <h1 className="flex-1 font-['Lato','Roboto',sans-serif] whitespace-nowrap">Autodesk Fusion Personnel (non destiné à un usage commercial)</h1>
        <div className="flex gap-[13px] text-[#333]">
          <button aria-label="Réduire"><Minus className="h-[6px] w-[6px]" /></button>
          <button aria-label="Restaurer"><Copy className="h-[5px] w-[5px] -scale-x-100" strokeWidth={3} /></button>
          <button aria-label="Fermer"><X className="h-[6px] w-[6px]" strokeWidth={2.500} /></button>
        </div>
        <div className="absolute inset-x-0 top-0 flex justify-center">
          <div className="flex h-[1px] w-[96px] bg-[#f3f3f3]"><span className="w-[20px] bg-[#a9d2f3]" /></div>
        </div>
      </header>
      <TabBar />
      <Toolbar />
      <main className="relative flex min-h-0 flex-1 items-center justify-center pt-[2px]">
        <Model />
        <Browser />
        <ViewCube />
        <div className="absolute bottom-[1px] left-[1px]">
          <PanelHeader title="COMMENTAIRES" />
        </div>
        <ViewControls />
      </main>
      <Timeline />
    </div>
  );
}
